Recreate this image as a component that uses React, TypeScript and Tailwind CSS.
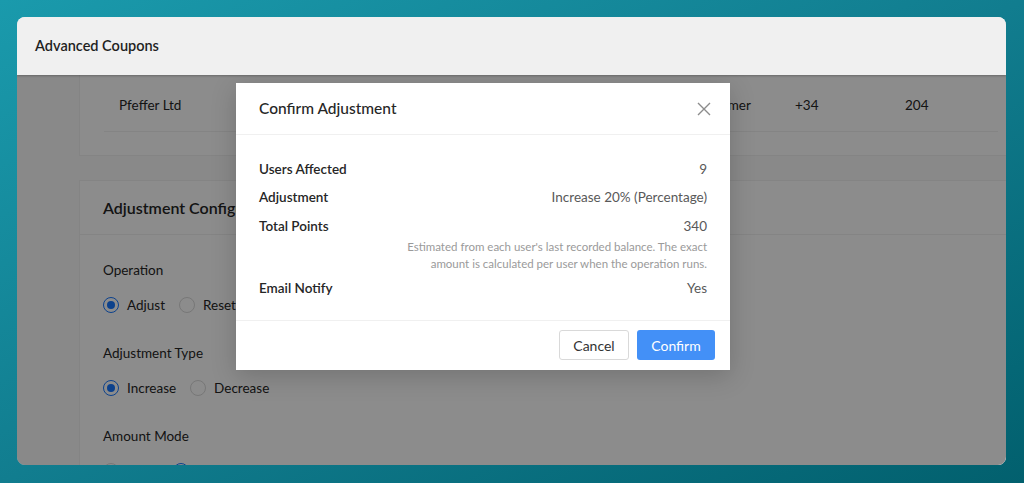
const font = { fontFamily: 'Lato, "Noto Sans", sans-serif' }

const Radio = ({ label, checked = false }: { label: string; checked?: boolean }) => (
  <label className="flex items-center gap-[8px] text-[13.5px] text-[#262626]">
    <span
      className={
        checked
          ? 'flex h-[16px] w-[16px] items-center justify-center rounded-full border border-[#1677ff] bg-white'
          : 'h-[16px] w-[16px] rounded-full border border-[#d9d9d9] bg-white'
      }
    >
      {checked && <span className="h-[8px] w-[8px] rounded-full bg-[#1677ff]" />}
    </span>
    {label}
  </label>
)

const FormItem = ({ label, children }: { label: string; children: React.ReactNode }) => (
  <div className="mb-[26px]">
    <div className="h-[22px] text-[13.5px] leading-[22px] text-[#262626]">{label}</div>
    <div className="mt-[13px] flex h-[22px] items-center gap-[14px]">{children}</div>
  </div>
)

const SummaryRow = ({ label, value }: { label: string; value: string }) => (
  <div className="flex h-[22px] items-center justify-between text-[13.5px]">
    <span className="font-semibold text-[#262626]">{label}</span>
    <span className="text-[#595959]">{value}</span>
  </div>
)

const ConfirmDialog = () => (
  <div className="absolute left-[219px] top-[8px] w-[494px] bg-white shadow-[0_6px_24px_rgba(0,0,0,0.18)]">
    <div className="flex h-[52px] items-center justify-between border-b border-[#f0f0f0] pl-[23px] pr-[18px]">
      <h2 className="text-[15.5px] font-medium text-[#262626]">Confirm Adjustment</h2>
      <svg width="14" height="14" viewBox="0 0 14 14" className="mr-[1px] text-[#8c8c8c]">
        <path d="M1 1L13 13M13 1L1 13" stroke="currentColor" strokeWidth="1.4" fill="none" />
      </svg>
    </div>
    <div className="flex flex-col gap-[6.5px] px-[23px] pb-[20px] pt-[23px]">
      <SummaryRow label="Users Affected" value="9" />
      <SummaryRow label="Adjustment" value="Increase 20% (Percentage)" />
      <div>
        <SummaryRow label="Total Points" value="340" />
        <p className="mt-[1px] text-right text-[11.5px] leading-[17px] text-[#9a9a9a]">
          Estimated from each user's last recorded balance. The exact
          <br />
          amount is calculated per user when the operation runs.
        </p>
      </div>
      <div className="-mt-[1px]">
        <SummaryRow label="Email Notify" value="Yes" />
      </div>
    </div>
    <div className="flex h-[50px] items-center justify-end gap-[8px] border-t border-[#f0f0f0] pr-[15px]">
      <button className="h-[30px] w-[70px] rounded-[3px] border border-[#d9d9d9] bg-white text-[14px] text-[#333]">
        Cancel
      </button>
      <button className="h-[30px] w-[78px] rounded-[3px] bg-[#4390f7] text-[14px] text-white">
        Confirm
      </button>
    </div>
  </div>
)

export default function App() {
  return (
    <div
      className="h-[483px] w-[1024px] overflow-hidden bg-linear-to-br from-[#1a9aac] via-[#117d8f] to-[#02606e] p-[17px] pr-[18px]"
      style={font}
    >
      <div className="flex h-[448px] flex-col overflow-hidden rounded-[8px] bg-[#fafafa]">
        <header className="relative z-10 flex h-[58px] shrink-0 items-center bg-[#f0f0f0] pl-[18px] shadow-[0_1px_2px_rgba(0,0,0,0.25)]">
          <span className="text-[14.5px] font-semibold text-[#1f1f1f]">Advanced Coupons</span>
        </header>

        <div className="relative flex-1 overflow-hidden">
          <div className="pl-[62px]">
            {/* customers table, scrolled so only the last row shows */}
            <div className="w-[944px] border-x border-b border-[#f0f0f0] bg-white px-[24px] pb-[23px]">
              <div className="flex h-[57px] items-center border-b border-[#f0f0f0] pt-[5px] text-[13.5px] text-[#262626]">
                <span className="w-[574px] pl-[15px]">Pfeffer Ltd</span>
                <span className="w-[102px] pl-[15px]">Customer</span>
                <span className="w-[110px] pl-[15px]">+34</span>
                <span className="pl-[15px]">204</span>
              </div>
            </div>

            <div className="mt-[24px] w-[944px] border border-[#f0f0f0] bg-white">
              <div className="flex h-[54px] items-center border-b border-[#f0f0f0] px-[23px]">
                <h3 className="text-[16px] font-semibold text-[#262626]">Adjustment Configuration</h3>
              </div>
              <div className="px-[23px] pt-[24px]">
                <FormItem label="Operation">
                  <Radio label="Adjust" checked />
                  <Radio label="Reset" />
                </FormItem>
                <FormItem label="Adjustment Type">
                  <Radio label="Increase" checked />
                  <Radio label="Decrease" />
                </FormItem>
                <FormItem label="Amount Mode">
                  <Radio label="Fixed" />
                  <Radio label="Percentage" checked />
                </FormItem>
              </div>
            </div>
          </div>

          <div className="absolute inset-0 bg-black/45" />
          <ConfirmDialog />
        </div>
      </div>
    </div>
  )
}
